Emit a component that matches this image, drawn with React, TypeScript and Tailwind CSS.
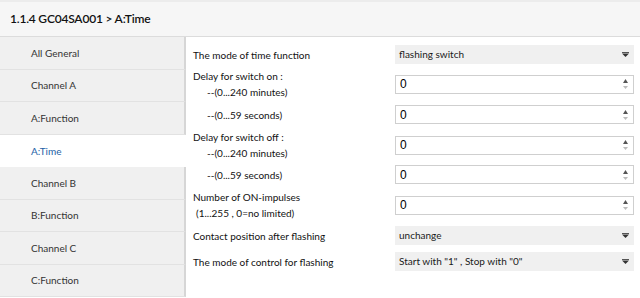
const navItems = [
  'All General',
  'Channel A',
  'A:Function',
  'A:Time',
  'Channel B',
  'B:Function',
  'Channel C',
  'C:Function',
];

function DropArrow() {
  return (
    <svg width="7" height="5" viewBox="0 0 7 5" className="shrink-0">
      <rect x="0" y="0" width="7" height="1" fill="#555" />
      <path d="M0 1.5 L7 1.5 L3.5 5 Z" fill="#333" />
    </svg>
  );
}

function Spinner() {
  return (
    <div className="flex flex-col items-center gap-[3px] shrink-0">
      <svg width="5" height="4" viewBox="0 0 5 4">
        <path d="M0 4 L5 4 L2.5 0 Z" fill="#555" />
      </svg>
      <svg width="5" height="3" viewBox="0 0 5 3">
        <path d="M0 0 L5 0 L2.5 3 Z" fill="#bbb" />
      </svg>
    </div>
  );
}

function Select({ value }: { value: string }) {
  return (
    <div className="w-[239px] h-[19px] bg-[#f0f0f0] flex items-center justify-between pl-[4px] pr-[5px] text-[10px] text-[#1a1a1a]">
      <span>{value}</span>
      <DropArrow />
    </div>
  );
}

function NumberInput({ value }: { value: string }) {
  return (
    <div className="w-[239px] h-[19px] bg-white border border-[#cfcfcf] flex items-center justify-between pl-[4px] pr-[5px] text-[12px] text-black font-['Liberation_Sans',sans-serif]">
      <span>{value}</span>
      <Spinner />
    </div>
  );
}

function Row({
  top,
  height,
  children,
  control,
}: {
  top: string;
  height: string;
  children: React.ReactNode;
  control: React.ReactNode;
}) {
  return (
    <div className={`flex items-center ${top} ${height}`}>
      <div className="w-[202px] shrink-0 leading-[16px] text-[10px] text-[#111]">{children}</div>
      {control}
    </div>
  );
}

export default function App() {
  return (
    <div className="w-[640px] h-[298px] bg-white overflow-hidden flex flex-col font-['Lato','Noto_Sans',sans-serif]">
      {/* Title bar */}
      <div className="h-[37px] shrink-0 bg-[#f6f6f6] border-t-2 border-t-[#ececec] border-b border-b-[#dcdcdc] flex items-center pl-[10px]">
        <span className="text-[12px] font-semibold tracking-[-0.2px] text-[#111]">1.1.4 GC04SA001 &gt; A:Time</span>
      </div>

      <div className="flex flex-1 min-h-0">
        {/* Sidebar */}
        <div className="w-[186px] shrink-0 flex flex-col">
          {navItems.map((item, i) => {
            const active = item === 'A:Time';
            const h = i % 2 === 0 ? 'h-[33px]' : 'h-[32px]';
            return (
              <div
                key={item}
                className={
                  active
                    ? `${h} shrink-0 flex items-center pl-[31px] bg-white text-[10px] text-[#1d5fa6]`
                    : `${h} shrink-0 flex items-center pl-[31px] bg-[#f0f0f0] border-b border-b-[#e2e2e2] border-r-2 border-r-[#d6d6d6] text-[10px] text-[#333]`
                }
              >
                {item}
              </div>
            );
          })}
        </div>

        {/* Parameters */}
        <div className="flex-1 pl-[7px] pt-[8px] flex flex-col">
          <Row top="" height="h-[19px]" control={<Select value="flashing switch" />}>
            The mode of time function
          </Row>
          <Row top="mt-[4px]" height="h-[32px]" control={<NumberInput value="0" />}>
            <div>Delay for switch on :</div>
            <div className="pl-[14px]">--(0...240 minutes)</div>
          </Row>
          <Row top="mt-[5px]" height="h-[19px]" control={<NumberInput value="0" />}>
            <div className="pl-[14px]">--(0...59 seconds)</div>
          </Row>
          <Row top="mt-[5px]" height="h-[32px]" control={<NumberInput value="0" />}>
            <div>Delay for switch off :</div>
            <div className="pl-[14px]">--(0...240 minutes)</div>
          </Row>
          <Row top="mt-[4px]" height="h-[19px]" control={<NumberInput value="0" />}>
            <div className="pl-[14px]">--(0...59 seconds)</div>
          </Row>
          <Row top="mt-[5px]" height="h-[32px]" control={<NumberInput value="0" />}>
            <div>Number of ON-impulses</div>
            <div className="pl-[3px]">(1...255 , 0=no limited)</div>
          </Row>
          <Row top="mt-[5px]" height="h-[19px]" control={<Select value="unchange" />}>
            Contact position after flashing
          </Row>
          <Row top="mt-[7px]" height="h-[19px]" control={<Select value={'Start with "1" , Stop with "0"'} />}>
            The mode of control for flashing
          </Row>
        </div>
      </div>
    </div>
  );
}
